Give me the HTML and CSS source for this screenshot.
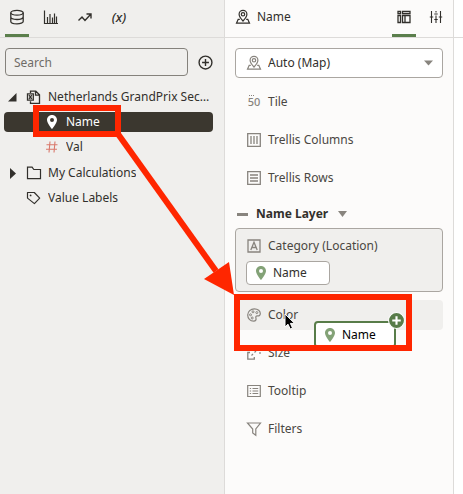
FILE: index.html
```html
<!DOCTYPE html>
<html lang="en">
<head>
<meta charset="utf-8">
<meta name="viewport" content="width=device-width, initial-scale=1">
<title>Data and grammar panels</title>
<link rel="stylesheet" href="styles.css">
</head>
<body>
<svg class="defs" aria-hidden="true">
  <symbol id="pin" viewBox="0 0 12 16"><path fill-rule="evenodd" d="M6 1C3.1 1 1 3.2 1 5.9 1 9.300 6 15 6 15s5-5.700 5-9.100C11 3.200 8.900 1 6 1zm0 3a2 2 0 1 1 0 4 2 2 0 0 1 0-4z" fill="currentColor"/></symbol>
  <symbol id="map" viewBox="0 0 16 16"><g fill="none" stroke="currentColor" stroke-width="1.200"><path d="M8 12C5.500 9.300 4.100 7.400 4.100 5.300a3.900 3.900 0 0 1 7.800 0C11.900 7.400 10.500 9.300 8 12z"/><circle cx="8" cy="5.300" r="1.700"/><path d="M4.800 10.300H3.200L1.500 14.200h13l-1.700-3.900h-1.600"/></g></symbol>
</svg>
<div class="app">
  <aside class="panel data">
    <nav class="bar">
      <button class="tab active" aria-label="Data"><svg viewBox="0 0 16 16"><g fill="none" stroke="currentColor" stroke-width="1.300"><ellipse cx="8" cy="3.800" rx="6.200" ry="2.400"/><path d="M1.800 3.800v8.600c0 1.300 2.800 2.400 6.200 2.400s6.200-1.100 6.200-2.400V3.800M1.800 8.100c0 1.300 2.800 2.400 6.200 2.400s6.200-1.100 6.200-2.400"/></g></svg></button>
      <button class="tab" aria-label="Visualizations"><svg viewBox="0 0 16 16"><path d="M1.500 1.500v13H15M4.500 14V8M7 14V5M9.500 14V8.500M11.500 14V4.500M13.500 14V7.500" fill="none" stroke="currentColor" stroke-width="1.200"/></svg></button>
      <button class="tab" aria-label="Analytics"><svg viewBox="0 0 16 16"><path d="M1.500 11.500l3.500-3.500 3 3.500 5.500-6M9.500 5h4.500v4.500" fill="none" stroke="currentColor" stroke-width="1.400"/></svg></button>
      <button class="tab fx" aria-label="Parameters">(x)</button>
    </nav>
    <div class="search">
      <input type="text" placeholder="Search" aria-label="Search">
      <button class="add" aria-label="Add data"><svg viewBox="0 0 14 14"><g fill="none" stroke="currentColor" stroke-width="1.300"><circle cx="7" cy="7" r="6"/><path d="M7 3.800v6.400M3.800 7h6.400"/></g></svg></button>
    </div>
    <ul class="tree">
      <li class="node">
        <svg class="twist" viewBox="0 0 9 9"><path d="M8.500 0v8.500H0z" fill="currentColor"/></svg>
        <svg class="icon" viewBox="0 0 16 16"><g fill="none" stroke="currentColor" stroke-width="1.300"><path d="M4.500 4V2.200h5.300l3.700 3.600v8.500h-9v-2.100M9.500 2.200v4h4"/><path d="M1.500 4.800h5.800v6.400H1.500zM3 6.200l2.800 3.600M5.800 6.200L3 9.800"/></g></svg>
        <span class="text">Netherlands GrandPrix Sec…</span>
      </li>
      <li class="node child selected"><svg class="pin" viewBox="0 0 12 16"><use href="#pin"/></svg><span class="text">Name</span></li>
      <li class="node child"><svg class="pin hash" viewBox="0 0 12 12"><path d="M4 .5L3 11.500M9 .5L8 11.500M.5 3.800h11M0 8.200h11" fill="none" stroke="currentColor" stroke-width="1.100"/></svg><span class="text">Val</span></li>
      <li class="node root">
        <svg class="twist" viewBox="0 0 9 9"><path d="M2-1l6 5.500-6 5.500z" fill="currentColor"/></svg>
        <svg class="icon" viewBox="0 0 16 16"><path d="M1.500 2.200h4.600l1.700 2.300h6.700v9.200h-13z" fill="none" stroke="currentColor" stroke-width="1.200"/></svg>
        <span class="text">My Calculations</span>
      </li>
      <li class="node">
        <span class="twist"></span>
        <svg class="icon" viewBox="0 0 16 16"><path d="M1.500 2.500h6.800l5.400 5.700-5.300 5.400-6.900-5.500z" fill="none" stroke="currentColor" stroke-width="1.200" stroke-linejoin="round"/><circle cx="4.600" cy="5.400" r=".9" fill="currentColor"/></svg>
        <span class="text">Value Labels</span>
      </li>
    </ul>
  </aside>
  <main class="panel grammar">
    <header class="bar">
      <div class="title"><svg class="icon" viewBox="0 0 16 16"><use href="#map"/></svg><span>Name</span></div>
      <button class="tab active" aria-label="Grammar"><svg viewBox="0 0 16 16"><path d="M2 2.500h2.500v2.200H2zM2 6.500h2.500v7H2zM6.500 2.500h7.500v2.200H6.500zM6.500 6.500h7.500v7H6.500zM9 6.500v7" fill="none" stroke="currentColor" stroke-width="1.300"/></svg></button>
      <button class="tab" aria-label="Properties"><svg viewBox="0 0 16 16"><path d="M3.500 2v5.500M3.500 10.500V14M8 2v1.500M8 6.500V14M12.500 2v5.500M12.500 10.500V14M1.800 8h3.400M6.300 5h3.400M10.800 8h3.400M3.500 8v2.500M12.500 8v2.500M6.300 10.500h3.400" fill="none" stroke="currentColor" stroke-width="1.100"/></svg></button>
    </header>
    <div class="content">
      <div class="picker">
        <svg class="icon" viewBox="0 0 16 16"><use href="#map"/></svg>
        <select aria-label="Visualization type"><option>Auto (Map)</option></select>
        <svg class="caret" viewBox="0 0 9 5"><path d="M0 0h9L4.500 5z" fill="currentColor"/></svg>
      </div>
      <div class="rows">
        <div class="row"><span class="fifty">50</span><span>Tile</span></div>
        <div class="row"><svg class="icon" viewBox="0 0 16 16"><path d="M1.700 1.700h12.600v12.600H1.700zM5 4v8M8 4v8M11 4v8" fill="none" stroke="currentColor" stroke-width="1.300"/></svg><span>Trellis Columns</span></div>
        <div class="row"><svg class="icon" viewBox="0 0 16 16"><path d="M1.700 1.700h12.600v12.600H1.700zM4 5h8M4 8h8M4 11h8" fill="none" stroke="currentColor" stroke-width="1.300"/></svg><span>Trellis Rows</span></div>
      </div>
      <h2 class="layer"><span class="dash"></span>Name Layer<svg class="caret" viewBox="0 0 9 6"><path d="M0 0h9L4.500 6z" fill="currentColor"/></svg></h2>
      <section class="category">
        <div class="label"><svg class="icon" viewBox="0 0 16 16"><path d="M2 2h12v12H2zM4.800 12L8 4.300l3.200 7.700M6 9.500h4" fill="none" stroke="currentColor" stroke-width="1.300"/></svg><span>Category (Location)</span></div>
        <button class="chip"><svg class="pin" viewBox="0 0 12 16"><use href="#pin"/></svg>Name</button>
      </section>
      <div class="rows">
        <div class="row target"><svg class="icon" viewBox="0 0 16 16"><path d="M8.300 1.800c3.700 0 6 2.200 6 4.800 0 1.800-1.200 2.500-2.800 2.300-1.400-.1-2 .7-1.600 1.900.5 1.700 0 3.400-2.300 3.400-3.400 0-5.900-2.700-5.900-6.100 0-3.600 3-6.300 6.600-6.300z" fill="none" stroke="currentColor" stroke-width="1.200"/><g fill="none" stroke="currentColor"><circle cx="7" cy="4.800" r="1"/><circle cx="10.800" cy="5.600" r="1"/><circle cx="4.500" cy="7.800" r="1"/><circle cx="6.200" cy="11" r="1"/></g></svg><span>Color</span></div>
        <div class="row"><svg class="icon" viewBox="0 0 16 16"><path d="M4 7.500H1.800v6.700h6.500V12" fill="none" stroke="currentColor" stroke-width="1.300"/><path d="M5.500 10.500l1.500-1.500M8.500 7.500L10 6M2 4.500V2h2.500M7 2h2M11.500 2H14v2.500M14 7v2" fill="none" stroke="currentColor" stroke-width="1.200"/></svg><span>Size</span></div>
        <div class="row"><svg class="icon" viewBox="0 0 16 16"><path d="M1.700 2.500h12.600v11H1.700zM6.500 5.500h5.700M6.500 8h5.700M6.500 10.500h5.700M3.800 5.500h1.300M3.800 8h1.300M3.800 10.500h1.300" fill="none" stroke="currentColor" stroke-width="1.200"/></svg><span>Tooltip</span></div>
        <div class="row"><svg class="icon" viewBox="0 0 16 16"><path d="M1.500 2h13L9.800 8v6.300L6.700 12V8z" fill="none" stroke="currentColor" stroke-width="1.200"/></svg><span>Filters</span></div>
      </div>
    </div>
  </main>
  <div class="edge"><div class="bar"></div></div>
</div>
<div class="chip drag"><svg class="pin" viewBox="0 0 12 16"><use href="#pin"/></svg>Name
  <svg class="plus" viewBox="0 0 16 16"><circle cx="8" cy="8" r="7.500" fill="#587c49" stroke="#fff"/><path d="M8 4v8M4 8h8" stroke="#fff" stroke-width="2"/></svg>
</div>
<svg class="cursor" viewBox="0 0 12 18" aria-hidden="true"><path d="M1 1v13l3-2.800L6.200 16l2.300-1-2.100-4.600h4.200z" fill="#000" stroke="#fff"/></svg>
<svg class="marks" viewBox="0 0 463 494" aria-hidden="true">
  <g fill="none" stroke="#ff2600" stroke-width="6"><path d="M36 108h82v26H36zM237 297h172v51H237z"/><path d="M118 134l98 137"/></g>
  <path d="M234 295l-30-16 25-17z" fill="#ff2600"/>
</svg>
</body>
</html>
```
FILE: styles.css
```css
* {
  box-sizing: border-box;
}

body {
  margin: 0;
  overflow: hidden;
  color: #32302c;
  font: 12px/20px "Noto Sans", "Open Sans", sans-serif;
}

button,
input,
select {
  margin: 0;
  padding: 0;
  border: 0;
  background: none;
  color: inherit;
  font: inherit;
}

svg {
  display: block;
  flex: none;
}

.defs {
  position: absolute;
  width: 0;
  height: 0;
}

.app {
  display: grid;
  grid-template-columns: minmax(0, 225fr) minmax(0, 229fr) 9px;
  min-height: 100vh;
}

.panel {
  border-right: 1px solid #dddbd9;
}

.data {
  background: #f0efed;
}

.grammar {
  background: #fcfbfa;
}

.edge {
  background: #fff;
}

.bar {
  display: flex;
  height: 38px;
  border-bottom: 1px solid #dddbd9;
}

.data .bar {
  gap: 10px;
  padding-left: 5px;
}

.grammar .bar {
  gap: 8px;
  padding: 0 5px 0 10px;
}

.tab {
  display: flex;
  align-items: center;
  justify-content: center;
  width: 24px;
  height: 37px;
  border-bottom: 3px solid transparent;
}

.tab.active {
  border-color: #5b7f4c;
}

.tab svg,
.icon {
  width: 16px;
  height: 16px;
}

.fx {
  font-size: 13px;
  font-style: italic;
  font-weight: 500;
}

.title {
  display: flex;
  flex: 1;
  align-items: center;
  gap: 6px;
  padding-bottom: 4px;
}

.search {
  display: flex;
  align-items: center;
  gap: 10px;
  padding: 10px 11px 0 5px;
}

.search input {
  flex: 1;
  min-width: 0;
  height: 28px;
  padding: 0 8px;
  border: 1px solid #85827c;
  border-radius: 4px;
}

.search input::placeholder {
  color: #6f6c67;
  opacity: 1;
}

.add svg {
  width: 15px;
  height: 15px;
}

.tree {
  display: grid;
  grid-template-columns: minmax(0, 1fr);
  gap: 5px;
  margin: 0;
  padding: 11px 11px 0 4px;
  list-style: none;
}

.node {
  display: flex;
  align-items: center;
  height: 20px;
  padding-left: 4px;
  border-radius: 4px;
}

.node .icon {
  margin: 0 6px 0 9px;
}

.root {
  margin-top: 1px;
}

.twist {
  flex: none;
  width: 9px;
  height: 9px;
  overflow: visible;
}

.text {
  overflow: hidden;
  text-overflow: ellipsis;
  white-space: nowrap;
}

.child {
  gap: 8px;
  padding-left: 42px;
}

.pin {
  width: 12px;
  height: 16px;
}

.hash {
  color: #d9796c;
}

.selected {
  background: #3b372f;
  color: #fff;
}

.content {
  padding: 10px;
}

.picker {
  display: grid;
  grid-template-columns: 16px minmax(0, 1fr) 9px;
  align-items: center;
  height: 30px;
  margin-bottom: 9px;
  padding: 0 9px 0 10px;
  border: 1px solid #aaa6a1;
  border-radius: 4px;
  background: #fff;
}

.picker .icon,
.picker .caret,
.row .icon,
.label .icon,
.fifty {
  color: #88847e;
}

.picker select {
  grid-area: 1 / 2 / 2 / 4;
  height: 28px;
  padding-left: 6px;
  appearance: none;
}

.picker .caret {
  grid-area: 1 / 3;
  pointer-events: none;
}

.caret {
  width: 9px;
  height: 6px;
  color: #88847e;
}

.rows {
  display: grid;
  gap: 8px;
}

.row,
.label {
  display: flex;
  align-items: center;
  gap: 6px;
  height: 30px;
  padding-left: 11px;
  color: #4a4742;
}

.target {
  border-radius: 4px;
  background: #f0efed;
}

.fifty {
  width: 16px;
  background: linear-gradient(90deg, #88847e 1px, transparent 1px) 3px 0 / 2px 1px no-repeat, linear-gradient(90deg, #88847e 1px, transparent 1px) 5px 0 / 2px 1px no-repeat, linear-gradient(90deg, #88847e 1px, transparent 1px) 7px 0 / 2px 1px no-repeat;
  font-size: 11px;
  font-weight: 500;
  line-height: 14px;
  text-align: center;
}

.layer {
  display: flex;
  align-items: center;
  gap: 8px;
  margin: 11px 0 4px;
  padding-left: 2px;
  font-size: 12px;
  line-height: 20px;
}

.dash {
  width: 11px;
  height: 3px;
  background: #88847e;
}

.layer .caret {
  margin-left: 2px;
}

.category {
  height: 64px;
  margin-bottom: 8px;
  padding: 2px 10px 0;
  border: 1px solid #aaa6a1;
  border-radius: 4px;
  background: #f0efed;
}

.label {
  padding-left: 0;
}

.chip {
  display: flex;
  align-items: center;
  gap: 6px;
  width: 84px;
  height: 24px;
  padding-left: 8px;
  border: 1px solid #aaa6a1;
  border-radius: 4px;
  background: #fff;
}

.chip .pin {
  color: #83a277;
}

.drag {
  position: absolute;
  top: 321px;
  left: 314px;
  width: 82px;
  height: 27px;
  border: 2px solid #587c49;
  color: #000;
}

.plus {
  position: absolute;
  top: -11px;
  right: -11px;
  width: 17px;
  height: 17px;
}

.cursor {
  position: absolute;
  top: 313px;
  left: 284px;
  width: 12px;
  height: 18px;
}

.marks {
  position: absolute;
  top: 0;
  left: 0;
  width: 463px;
  height: 494px;
  pointer-events: none;
}
```
